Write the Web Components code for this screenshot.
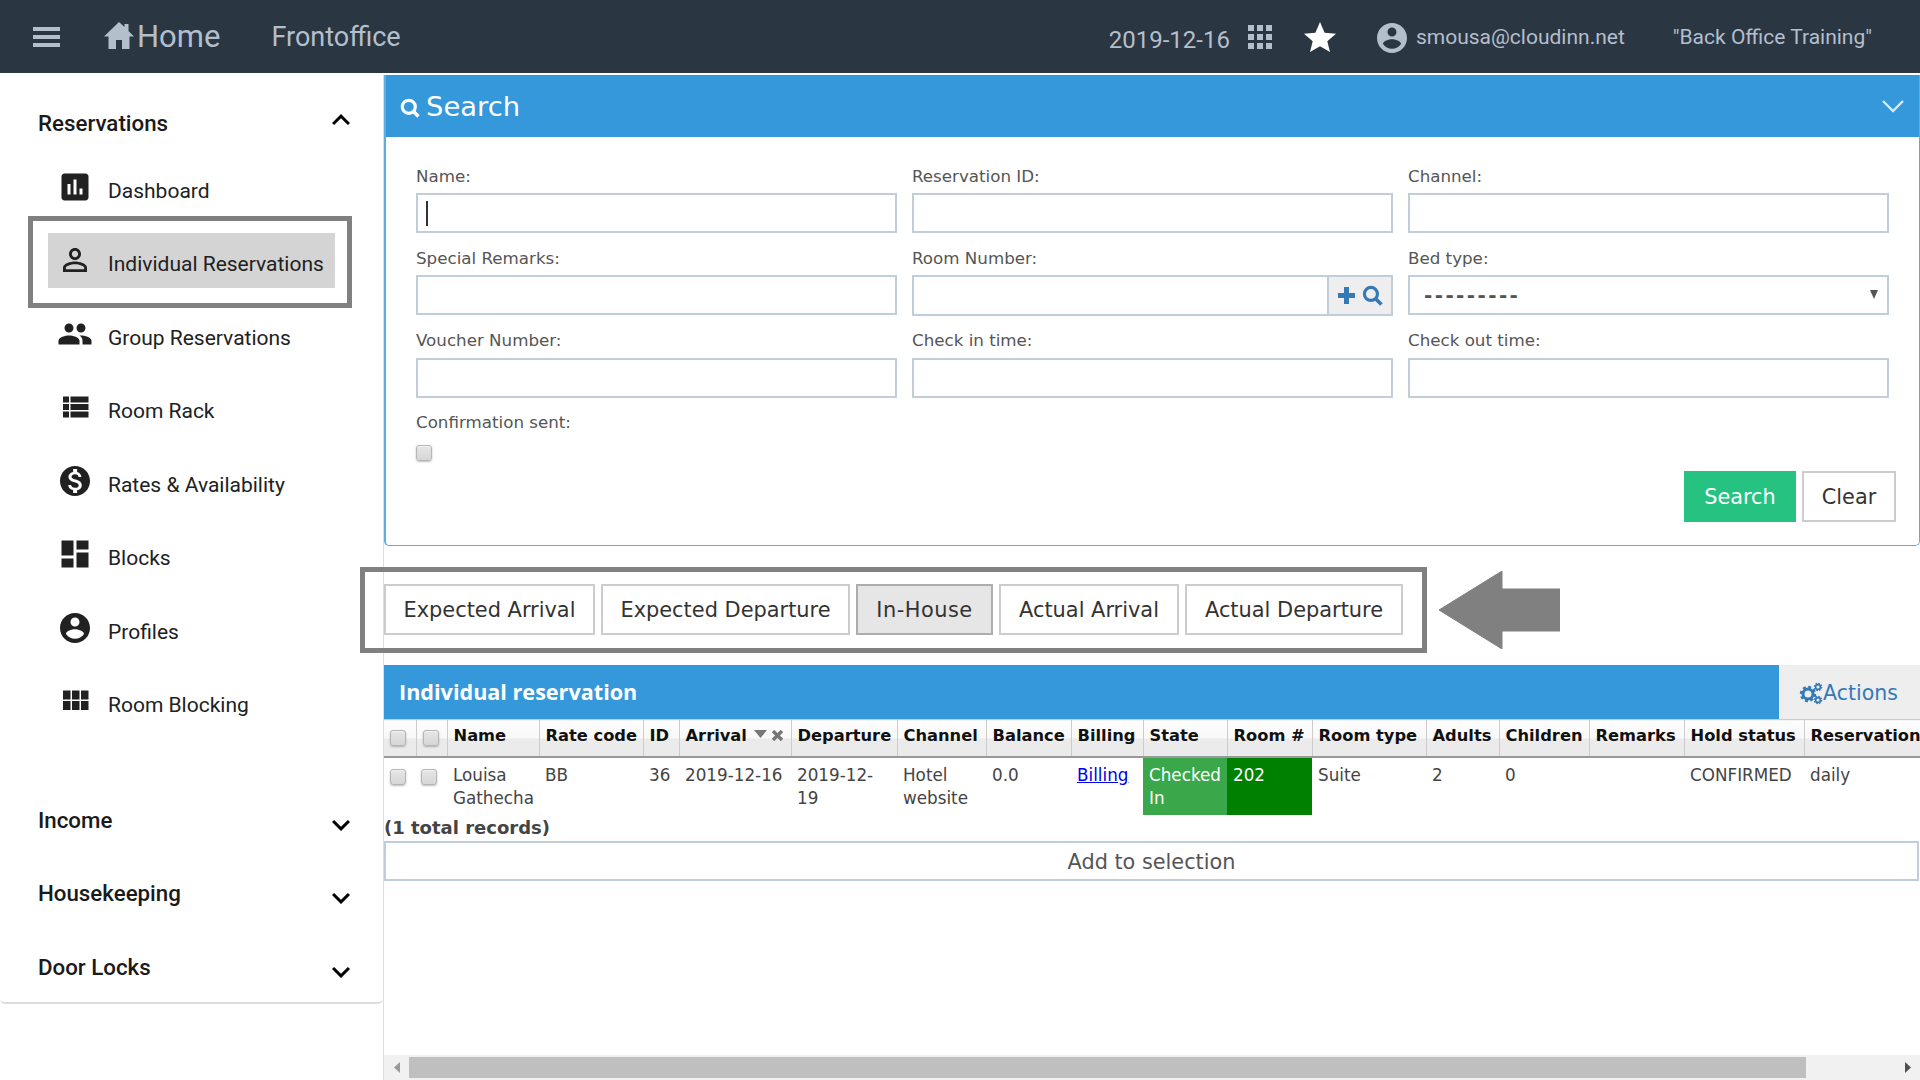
<!DOCTYPE html>
<html lang="en"><head><meta charset="utf-8"><title>Individual Reservations</title>
<style>
html,body{margin:0;padding:0;height:1080px;overflow:hidden;background:#fff}
body{display:flex;flex-direction:column;font-family:"DejaVu Sans",sans-serif}
.layout{display:flex;flex:1;margin-top:2px;min-height:0}
</style></head><body>
<app-header></app-header>
<div class="layout">
  <app-sidebar>
    <side-section label="Reservations" open>
      <nav-item icon="assessment">Dashboard</nav-item>
      <nav-item icon="person" active>Individual Reservations</nav-item>
      <nav-item icon="people">Group Reservations</nav-item>
      <nav-item icon="list">Room Rack</nav-item>
      <nav-item icon="money">Rates &amp; Availability</nav-item>
      <nav-item icon="dash">Blocks</nav-item>
      <nav-item icon="account">Profiles</nav-item>
      <nav-item icon="module">Room Blocking</nav-item>
    </side-section>
    <side-section label="Income" style="margin-top:50px"></side-section>
    <side-section label="Housekeeping" style="margin-top:15px"></side-section>
    <side-section label="Door Locks" style="margin-top:16px"></side-section>
  </app-sidebar>
  <main-area>
    <search-panel></search-panel>
    <tab-bar></tab-bar>
    <res-table></res-table>
    <fake-scroll></fake-scroll>
  </main-area>
</div>
<script>
const P={
menu:'M3 18h18v-2H3v2zm0-5h18v-2H3v2zm0-7v2h18V6H3z',
assessment:'M19 3H5c-1.1 0-2 .9-2 2v14c0 1.1.9 2 2 2h14c1.1 0 2-.9 2-2V5c0-1.1-.9-2-2-2zM9 17H7v-7h2v7zm4 0h-2V7h2v10zm4 0h-2v-4h2v4z',
person:'M12 5.9c1.16 0 2.1.94 2.1 2.1s-.94 2.1-2.1 2.1S9.9 9.16 9.9 8s.94-2.1 2.1-2.1m0 9c2.97 0 6.1 1.46 6.1 2.1v1.1H5.9V17c0-.64 3.13-2.1 6.1-2.1M12 4C9.79 4 8 5.79 8 8s1.79 4 4 4 4-1.79 4-4-1.79-4-4-4zm0 9c-2.67 0-8 1.34-8 4v3h16v-3c0-2.66-5.33-4-8-4z',
people:'M16 11c1.66 0 2.99-1.34 2.99-3S17.66 5 16 5c-1.66 0-3 1.34-3 3s1.34 3 3 3zm-8 0c1.66 0 2.99-1.34 2.99-3S9.66 5 8 5C6.34 5 5 6.34 5 8s1.34 3 3 3zm0 2c-2.33 0-7 1.17-7 3.5V19h14v-2.5c0-2.33-4.67-3.5-7-3.5zm8 0c-.29 0-.62.02-.97.05 1.16.84 1.97 1.97 1.97 3.45V19h6v-2.5c0-2.33-4.67-3.5-7-3.5z',
list:'M4 14h4v-4H4v4zm0 5h4v-4H4v4zM4 9h4V5H4v4zm5 5h12v-4H9v4zm0 5h12v-4H9v4zM9 5v4h12V5H9z',
money:'M12 2C6.48 2 2 6.48 2 12s4.48 10 10 10 10-4.48 10-10S17.52 2 12 2zm1.41 16.09V20h-2.67v-1.93c-1.71-.36-3.16-1.46-3.27-3.4h1.96c.1 1.05.82 1.87 2.65 1.87 1.96 0 2.4-.98 2.4-1.59 0-.83-.44-1.61-2.67-2.14-2.48-.6-4.18-1.62-4.18-3.67 0-1.72 1.39-2.84 3.11-3.21V4h2.67v1.95c1.86.45 2.79 1.86 2.85 3.39H14.3c-.05-1.11-.64-1.87-2.22-1.87-1.5 0-2.4.68-2.4 1.64 0 .84.65 1.39 2.67 1.91s4.18 1.39 4.18 3.91c-.01 1.83-1.38 2.83-3.12 3.16z',
dash:'M3 13h8V3H3v10zm0 8h8v-6H3v6zm10 0h8V11h-8v10zm0-18v6h8V3h-8z',
account:'M12 2C6.48 2 2 6.48 2 12s4.48 10 10 10 10-4.48 10-10S17.52 2 12 2zm0 3c1.66 0 3 1.34 3 3s-1.34 3-3 3-3-1.34-3-3 1.34-3 3-3zm0 14.2c-2.5 0-4.71-1.28-6-3.22.03-1.99 4-3.08 6-3.08 1.99 0 5.97 1.09 6 3.08-1.29 1.94-3.5 3.22-6 3.22z',
module:'M4 11h5V5H4v6zm0 7h5v-6H4v6zm6 0h5v-6h-5v6zm6 0h5v-6h-5v6zm-6-7h5V5h-5v6zm6-6v6h5V5h-5z',
less:'M12 8l-6 6 1.41 1.41L12 10.83l4.59 4.58L18 14z',
more:'M16.59 8.59L12 13.17 7.41 8.59 6 10l6 6 6-6z'};
const svg=(n,s=36)=>`<svg width="${s}" height="${s}" viewBox="0 0 24 24" fill="currentColor" aria-hidden="true"><path d="${P[n]}"/></svg>`;
const lens=(s,c)=>`<svg width="${s}" height="${s}" viewBox="0 0 20 20" fill="none" stroke="${c}" aria-hidden="true"><circle cx="8.5" cy="8.5" r="6.2" stroke-width="3"/><path d="M13 13l5.5 5.5" stroke-width="3.4"/></svg>`;
function def(name,css,html,extra){
  customElements.define(name,class extends HTMLElement{
    constructor(){super();const r=this.attachShadow({mode:'open'});
      r.innerHTML=`<style>${css}</style>`+(typeof html==='function'?html(this):html);}
    connectedCallback(){if(extra)extra(this)}
  });
}

def('ui-check',`:host{display:inline-block;width:16px;height:16px;box-sizing:border-box;border:1px solid #b5b5b5;border-radius:3px;background:linear-gradient(#e6e6e6,#d6d6d6);box-shadow:0 1px 2px rgba(0,0,0,.25),inset 0 1px 0 #f2f2f2}`,'');

def('app-header',`
:host{display:flex;align-items:center;height:73px;flex:none;background:#2b3643;color:#b4bfcc;font-family:Roboto,sans-serif;box-sizing:border-box;padding-right:48px}
.burger{width:27px;height:20px;margin-left:33px;display:flex;flex-direction:column;justify-content:space-between}
.burger i{display:block;height:4px;background:#b4bfcc}
.home{margin-left:44px;display:flex;align-items:center;font-size:31px}
.home svg{margin-right:3px;margin-top:-3px}
.front{margin-left:51px;font-size:27px}
.right{margin-left:auto;display:flex;align-items:center}
.date{font-size:24px;margin-top:6px}
.grid{display:grid;grid-template-columns:repeat(3,6px);grid-auto-rows:6px;gap:3px;margin-left:18px;}
.grid i{background:#b4bfcc;display:block}
.star{margin-left:32px;color:#fff;display:flex}
.user{margin-left:38px;display:flex;margin-top:2px}
.mail{font-size:21px;margin-left:6px}
.org{font-size:21px;margin-left:48px}
`,`<div class="burger"><i></i><i></i><i></i></div>
<div class="home"><svg width="30" height="27" viewBox="0 0 30 27" fill="#b4bfcc" aria-hidden="true"><path d="M15 0L0 14.5h4.5V27H12V18h6v9h7.5V14.5H30L24.5 9V2h-4v3z"/></svg><span>Home</span></div>
<div class="front">Frontoffice</div>
<div class="right"><span class="date">2019-12-16</span>
<div class="grid">${'<i></i>'.repeat(9)}</div>
<span class="star"><svg width="32" height="30" viewBox="0 0 32 30" fill="#fff" aria-hidden="true"><path d="M16 0l4.6 10.7 11.4 1-8.7 7.5 2.7 10.8L16 24.2 6 30l2.7-10.8L0 11.7l11.4-1z"/></svg></span>
<span class="user">${svg('account',36)}</span>
<span class="mail">smousa@cloudinn.net</span>
<span class="org">"Back Office Training"</span></div>`);

def('app-sidebar',`
:host{display:block;width:384px;flex:none;box-sizing:border-box;border-right:1px solid #ddd;font-family:Roboto,sans-serif;color:#212121}
.card{height:929px;box-sizing:border-box;padding-top:18px;border-bottom:2px solid #ddd;border-radius:0 0 5px 5px}
`,`<div class="card"><slot></slot></div>`);

def('side-section',`
:host{display:block}
.h{height:58px;display:flex;align-items:center;padding-left:38px;font-size:22.3px;font-weight:500;color:#1a1a1a}
.h.o span:first-child{padding-top:1px}
.c{margin-left:auto;margin-right:24px;display:flex;color:#000}
.c.up{margin-top:-5px}.c.down{margin-top:9px}
.items{margin-top:2px}
`,h=>{const o=h.hasAttribute('open');return `<div class="h ${o?'o':''}"><span>${h.getAttribute('label')}</span><span class="c ${o?'up':'down'}">${svg(o?'less':'more')}</span></div>${o?'<div class="items"><slot></slot></div>':''}`});

def('nav-item',`
:host{display:block;height:73.5px;position:relative;box-sizing:border-box;padding-top:6.25px}
.row{margin-left:48px;width:287px;height:55px;display:flex;align-items:center;font-size:21px;color:#212121}
.ic{width:36px;height:36px;margin:0 15px 0 9px;display:flex;flex:none}
.t{padding-top:8px;white-space:nowrap}
:host([active]) .row{background:#d4d4d4}
.frame{position:absolute;left:28px;top:-11px;width:324px;height:92px;box-sizing:border-box;border:5px solid #808080;pointer-events:none}
`,h=>`<div class="row"><span class="ic">${svg(h.getAttribute('icon'))}</span><span class="t"><slot></slot></span></div>${h.hasAttribute('active')?'<div class="frame"></div>':''}`);

def('main-area',`:host{display:flex;flex-direction:column;width:1536px;flex:none;min-width:0;height:1005px;overflow:visible;position:relative;color:#444;font-family:"DejaVu Sans",sans-serif}`,`<slot></slot>`);

def('form-field',`
:host{display:block;min-width:0}
label{display:block;height:42px;box-sizing:border-box;padding-top:14.5px;line-height:20px;font-size:16.7px;color:#555}
`,h=>`<label>${h.getAttribute('label')}</label><slot></slot>`);

def('text-box',`
:host{display:block;position:relative;height:40px}
input{display:block;width:100%;height:40px;box-sizing:border-box;border:2px solid #c2cddc;background:#fff;padding:0 8px;margin:0;outline:none;font:16.8px "DejaVu Sans",sans-serif;border-radius:0}
.caret{position:absolute;left:10px;top:8px;width:1.5px;height:25px;background:#333}
`,h=>`<input type="text">${h.hasAttribute('focused')?'<span class="caret"></span>':''}`);

def('addon-box',`
:host{display:flex;height:40.5px;box-sizing:border-box;border:2px solid #c2cddc}
input{flex:1;min-width:0;border:0;outline:none;padding:0 8px;background:#fff}
.add{width:64px;flex:none;background:#eee;border-left:2px solid #c2cddc;box-sizing:border-box;display:flex;align-items:center;justify-content:center;gap:7px;padding-left:1px}
`,`<input type="text"><span class="add"><svg width="17" height="17" viewBox="0 0 17 17" fill="#337ab7" aria-hidden="true"><path d="M6 0h5v6h6v5h-6v6H6v-6H0V6h6z"/></svg>${lens(21,'#337ab7')}</span>`);

def('select-box',`
:host{display:flex;align-items:center;height:39.5px;box-sizing:border-box;border:2px solid #c2cddc;font-size:20px;font-weight:700;color:#555;padding-left:14px;padding-right:9px}
span{letter-spacing:2.4px;line-height:1}
svg{margin-left:auto}
`,`<span>---------</span><svg width="8" height="9" viewBox="0 0 8 9" fill="#555" aria-hidden="true"><path d="M0 0h8L4 9z"/></svg>`);

def('search-panel',`
:host{display:block;flex:none;box-sizing:border-box;height:471px;border:1px solid #5dade2;border-left-width:2px;border-top:0;border-radius:0 0 5px 5px}
.head{height:62px;background:#3498db;color:#fff;display:flex;align-items:center;padding-left:14px;font-size:27.4px}
.head svg.l{margin-right:6px;margin-top:3px}
.head svg.chev{margin-left:auto;margin-right:15px}
.form{display:grid;grid-template-columns:repeat(3,481px);column-gap:15px;padding:14px 30px 0;}
.chk{display:block;margin-top:5px}
.row4{grid-column:1/4;height:63px}
.btns{display:flex;justify-content:flex-end;gap:6px;padding-right:23px;margin-top:10px}
.btn{height:51px;box-sizing:border-box;display:flex;align-items:center;justify-content:center;font-size:20.8px;padding-top:2px}
.s{width:112px;background:#26c281;color:#fff}
.c{width:94px;border:2px solid #ccc;color:#333}
`,`<div class="head"><svg class="l" width="20" height="20" viewBox="0 0 20 20" fill="none" stroke="#fff" aria-hidden="true"><circle cx="8.8" cy="8.8" r="6.5" stroke-width="3.2"/><path d="M13 13l5.5 5.5" stroke-width="3.6"/></svg><span>Search</span>
<svg class="chev" width="22" height="13" viewBox="0 0 22 13" fill="none" stroke="#d6ebf9" stroke-width="2.4" aria-hidden="true"><path d="M1 1l10 10L21 1"/></svg></div>
<div class="form">
<form-field label="Name:"><text-box focused></text-box></form-field>
<form-field label="Reservation ID:"><text-box></text-box></form-field>
<form-field label="Channel:"><text-box></text-box></form-field>
<form-field label="Special Remarks:"><text-box></text-box></form-field>
<form-field label="Room Number:"><addon-box></addon-box></form-field>
<form-field label="Bed type:"><select-box></select-box></form-field>
<form-field label="Voucher Number:"><text-box></text-box></form-field>
<form-field label="Check in time:"><text-box></text-box></form-field>
<form-field label="Check out time:"><text-box></text-box></form-field>
<form-field class="row4" label="Confirmation sent:"><ui-check class="chk"></ui-check></form-field>
</div>
<div class="btns"><span class="btn s">Search</span><span class="btn c">Clear</span></div>`);

def('tab-bar',`
:host{display:flex;gap:6px;flex:none;height:51px;margin-top:38px;margin-bottom:30px;position:relative;font-size:20.9px;color:#333}
.t{height:51px;box-sizing:border-box;border:2px solid #ccc;display:flex;align-items:center;justify-content:center;white-space:nowrap;background:#fff}
.t.on{background:#e6e6e6;border-color:#adadad;letter-spacing:.5px}
.frame{position:absolute;left:-24px;top:-17px;width:1067px;height:86px;box-sizing:border-box;border:5px solid #808080;pointer-events:none}
.arrow{position:absolute;left:1055px;top:-13px}
`,`<span class="t" style="width:211px">Expected Arrival</span><span class="t" style="width:249px">Expected Departure</span><span class="t on" style="width:137px">In-House</span><span class="t" style="width:180px">Actual Arrival</span><span class="t" style="width:218px">Actual Departure</span>
<div class="frame"></div>
<svg class="arrow" width="121" height="78" viewBox="0 0 121 78" fill="#808080" aria-hidden="true"><path d="M0 39L63 0v18h58v42H63v18z" stroke="#808080" stroke-linejoin="round"/></svg>`);

const cols=[32,31,92,104,36,112,106,89,85,72,84,85,114,73,90,95,120,130];
const heads=['','', 'Name','Rate code','ID','Arrival','Departure','Channel','Balance','Billing','State','Room #','Room type','Adults','Children','Remarks','Hold status','Reservation'];
def('res-table',`
:host{display:block;flex:none;font-size:16.8px;color:#444}
.bar{display:flex;height:54px}
.title{flex:1;background:#3498db;color:#fff;font:700 21.6px "Open Sans",sans-serif;display:flex;align-items:center;padding:0 0 2px 15px}
.act{width:141px;background:#eee;color:#337ab7;font-size:20.5px;display:flex;align-items:center;justify-content:center;padding:2px 2px 0 0;box-sizing:border-box}
.wrap{overflow:hidden;width:1536px}
table{border-collapse:collapse;table-layout:fixed;width:${cols.reduce((a,b)=>a+b,0)}px}
th{height:37px;box-sizing:border-box;padding:0 6px 4px;text-align:left;font-size:16.3px;color:#111;white-space:nowrap;overflow:hidden;background:linear-gradient(#fdfdfd 0,#f8f8f8 50%,#ebebeb 50%,#ebebeb 100%);border-right:1px solid #ccc;border-top:1px solid #ccc;border-bottom:2px solid #999}
th:last-child{border-right:0}
th.k{padding:5px 0 0 6px;text-align:left}
td{height:58px;box-sizing:border-box;padding:6.5px 6px 4px;line-height:22.7px;vertical-align:top}
td.k{padding:10.5px 0 0 5px;text-align:left}
td.k1{padding-left:6px}
td.st{background:#3aa84a;color:#fff}td.rm{background:#008000;color:#fff}
a{color:#00e;text-decoration:underline}
.sort{display:inline-flex;align-items:flex-start;gap:5px;margin-left:7px;vertical-align:middle;margin-top:-3px}
.rec{height:26px;line-height:26px;font-weight:700;font-size:18px;color:#444}
.add{height:40px;box-sizing:border-box;margin-right:1px;border:2px solid #c2cddc;display:flex;align-items:center;justify-content:center;font-size:20.8px;color:#555;padding-top:2px}
`,`<div class="bar"><div class="title">Individual reservation</div><div class="act"><svg width="24" height="24" viewBox="0 0 24 24" fill="none" stroke="#337ab7" aria-hidden="true"><circle cx="9" cy="13" r="5" stroke-width="3"/><circle cx="9" cy="13" r="7" stroke-width="2.4" stroke-dasharray="3 2.5"/><circle cx="19" cy="6" r="2.4" stroke-width="1.6"/><circle cx="19" cy="6" r="3.6" stroke-width="1.4" stroke-dasharray="1.6 1.2"/><circle cx="19" cy="19" r="2.4" stroke-width="1.6"/><circle cx="19" cy="19" r="3.6" stroke-width="1.4" stroke-dasharray="1.6 1.2"/></svg><span>Actions</span></div></div>
<div class="wrap"><table><colgroup>${cols.map(c=>`<col style="width:${c}px">`).join('')}</colgroup>
<thead><tr>${heads.map((h,i)=>i<2?'<th class="k"><ui-check></ui-check></th>':i==5?`<th>${h}<span class="sort"><svg width="13" height="8" viewBox="0 0 13 8" fill="#777" aria-hidden="true"><path d="M0 0h13L6.5 8z"/></svg><svg width="11" height="11" viewBox="0 0 11 11" stroke="#777" stroke-width="3.4" aria-hidden="true"><path d="M1 1l9 9M10 1l-9 9"/></svg></span></th>`:`<th>${h}</th>`).join('')}</tr></thead>
<tbody><tr><td class="k k1"><ui-check></ui-check></td><td class="k"><ui-check></ui-check></td><td>Louisa Gathecha</td><td>BB</td><td>36</td><td>2019-12-16</td><td>2019-12-19</td><td>Hotel website</td><td>0.0</td><td><a href="#">Billing</a></td><td class="st">Checked In</td><td class="rm">202</td><td>Suite</td><td>2</td><td>0</td><td></td><td>CONFIRMED</td><td>daily</td></tr></tbody></table></div>
<div class="rec">(1 total records)</div><div class="add">Add to selection</div>`);

def('fake-scroll',`
:host{display:flex;align-items:center;height:25px;margin-top:auto;flex:none;background:#f1f1f1;box-sizing:border-box}
.b{width:25px;height:21px;display:flex;align-items:center;justify-content:center;flex:none}
.th{width:1397px;height:21px;background:#bfbfbf;flex:none}
.e{margin-left:auto}
`,`<span class="b"><svg width="6" height="11" viewBox="0 0 6 11" fill="#999" aria-hidden="true"><path d="M6 0v11L0 5.5z"/></svg></span><span class="th"></span><span class="b e"><svg width="6" height="11" viewBox="0 0 6 11" fill="#505050" aria-hidden="true"><path d="M0 0v11l6-5.5z"/></svg></span>`);
</script>
</body></html>
